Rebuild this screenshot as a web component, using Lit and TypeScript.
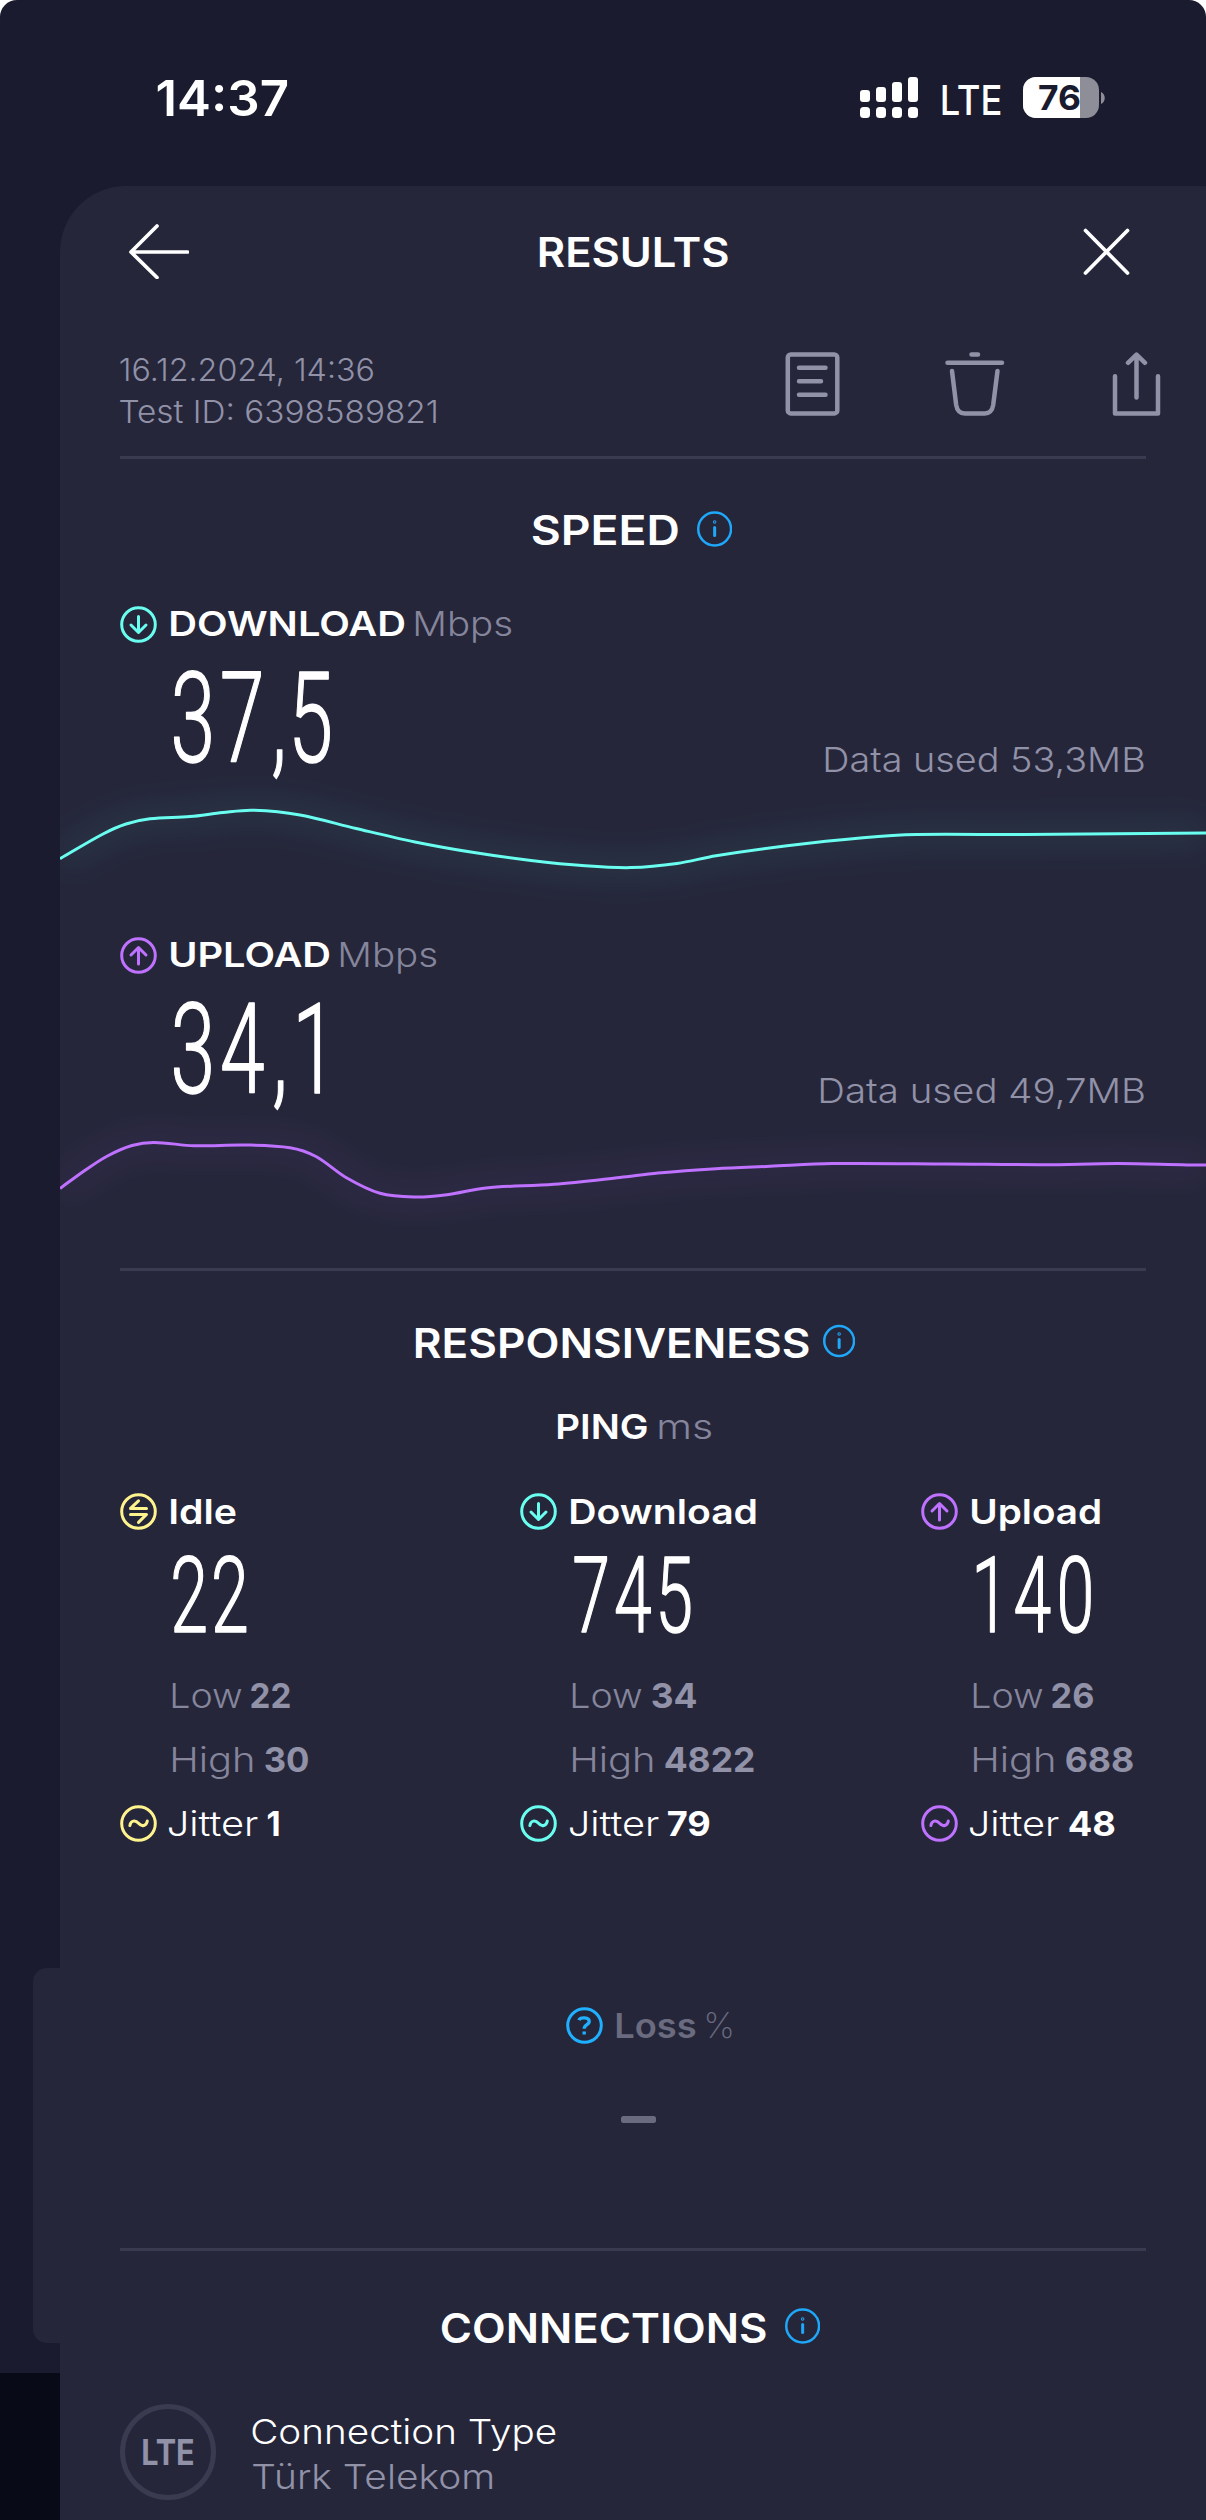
import { LitElement, html, svg, css } from "lit";
import { customElement, property } from "lit/decorators.js";

type Point = [number, number];

const CAP = 0.727;

/** Text whose box is exactly its cap height, set to a fixed measured width. */
@customElement("fit-text")
class FitText extends LitElement {
  @property() text = "";
  @property({ type: Number }) width = 100;
  @property({ type: Number }) size = 34.6;
  @property({ type: Number }) weight = 400;
  @property({ type: Number }) lead = 0.08;
  @property({ type: Number }) trail = 0.06;

  static styles = css`
    :host { display: block; flex: none; }
    svg { display: block; overflow: visible; }
    text { font-family: Inter, "Liberation Sans", sans-serif; fill: currentColor; }
  `;

  render() {
    const h = this.size * CAP;
    const start = -this.lead * this.size;
    const length = this.width + (this.lead + this.trail) * this.size;
    return html`<svg width=${this.width} height=${h}>
      <text x=${start} y=${h} font-size=${this.size} font-weight=${this.weight}
        textLength=${length} lengthAdjust="spacingAndGlyphs">${this.text}</text>
    </svg>`;
  }
}

const LSB: Record<string, number> = {
  "0": 0.065, "1": 0.07, "2": 0.055, "3": 0.055, "4": 0.03, "5": 0.09, "7": 0.04, ",": 0.01,
};

/** Tall condensed figures. */
@customElement("tall-number")
class TallNumber extends LitElement {
  @property() value = "";
  @property({ type: Array }) stops: number[] = [];
  @property({ type: Number }) height = 90;

  static styles = css`
    :host { display: block; flex: none; }
    svg { display: block; overflow: visible; }
    text { font-family: Roboto, sans-serif; font-weight: 300; fill: #fff; stroke: #fff; stroke-width: 1.5; stroke-linejoin: round; }
  `;

  render() {
    const size = this.height / 0.715;
    const sx = 0.64;
    const xs = this.stops.map((s, i) => s / sx - (LSB[this.value[i]] ?? 0) * size + 1.5).join(" ");
    return html`<svg width="170" height=${this.height}>
      <text transform="scale(${sx} 1)" x=${xs} y=${this.height} font-size=${size}>${this.value}</text>
    </svg>`;
  }
}

const glyphs = {
  down: svg`<path d="M18.5 10.5V26M11 19l7.5 7.5L26 19"/>`,
  up: svg`<path d="M18.5 27V11M11 18l7.5-7.5L26 18"/>`,
  swap: svg`<path d="M26.5 15.4h-16l8-7.6M10.5 21.4h16l-8 8"/>`,
  wave: svg`<path d="M9.9 20.6c.6-5.200 5.400-6 8.600-2.300 3.200 3.800 8 2.800 8.800-2.400"/>`,
  help: svg`<path d="M12.900 13.200c1.200-3.200 10.400-3.500 10.300 1.400 0 3.300-5 3-5 7.200M18.200 24.600v3" stroke-width="3.400" stroke-linecap="butt"/>`,
};

@customElement("ring-icon")
class RingIcon extends LitElement {
  @property() kind: keyof typeof glyphs = "down";

  static styles = css`
    :host { display: block; flex: none; margin-left: -0.5px; }
    svg { display: block; fill: none; stroke: currentColor; stroke-width: 3; stroke-linecap: round; stroke-linejoin: round; }
  `;

  render() {
    return html`<svg width="37" height="37"><circle cx="18.5" cy="18.5" r="16.800"/>${glyphs[this.kind]}</svg>`;
  }
}

function smooth(points: Point[]): string {
  let d = `M${points[0][0]} ${points[0][1]}`;
  for (let i = 0; i < points.length - 1; i++) {
    const a = points[Math.max(0, i - 1)];
    const b = points[i];
    const c = points[i + 1];
    const e = points[Math.min(points.length - 1, i + 2)];
    const dx = (c[0] - b[0]) / 3;
    const m1 = (c[1] - a[1]) / (c[0] - a[0] || 1);
    const m2 = (e[1] - b[1]) / (e[0] - b[0] || 1);
    d += `C${b[0] + dx} ${b[1] + m1 * dx} ${c[0] - dx} ${c[1] - m2 * dx} ${c[0]} ${c[1]}`;
  }
  return d;
}

@customElement("speed-chart")
class SpeedChart extends LitElement {
  @property({ type: Array }) points: Point[] = [];

  static styles = css`
    :host { display: block; }
    svg { display: block; overflow: visible; fill: none; stroke: currentColor; }
    .glow { stroke-width: 34; opacity: 0.05; filter: blur(14px); clip-path: none; }
    .line { stroke-width: 3; }
    .clip { overflow: hidden; margin: -40px 0; padding: 40px 0; }
  `;

  render() {
    const d = smooth(this.points);
    return html`<div class="clip"><svg width="1146" height="110"><path class="glow" d=${d}/><path class="line" d=${d}/></svg></div>`;
  }
}

const downloadCurve: Point[] = [
  [0, 78.7], [43, 54], [66, 44], [90, 38.8], [130, 36.6], [163, 32.500], [193, 30.2], [240, 35], [296, 48.500], [355, 62], [414, 72.6],
  [471, 80.500], [525, 85.800], [571, 87.600], [617, 83.500], [656, 75.700], [725, 66], [803, 57.700], [857, 54.500], [965, 54.600], [1146, 52.900],
];
const uploadCurve: Point[] = [
  [0, 77.500], [23, 60.700], [47, 45.200], [72, 34.500], [94, 31.400], [134, 34.800], [185, 34], [230, 36.700], [256, 45.500], [286, 66.500],
  [320, 82.300], [355, 86], [387, 83.700], [426, 76.900], [494, 73.300], [560, 66.500], [598, 62], [656, 57.700], [710, 55.300],
  [772, 52.600], [888, 53], [984, 53.700], [1058, 52.600], [1127, 53.900], [1146, 53.900],
];

const pings = [
  { tone: "yellow", kind: "swap", name: "Idle", nameW: 64, value: "22", stops: [0, 40.800], low: "22", lowW: 39, high: "30", highW: 43, jitter: "1", jitterW: 11 },
  { tone: "cyan", kind: "down", name: "Download", nameW: 185, value: "745", stops: [0, 41, 86.500], low: "34", lowW: 44, high: "4822", highW: 89, jitter: "79", jitterW: 41 },
  { tone: "purple", kind: "up", name: "Upload", nameW: 128, value: "140", stops: [1, 40.500, 86], low: "26", lowW: 41, high: "688", highW: 67, jitter: "48", jitterW: 45 },
];

@customElement("app-root")
class AppRoot extends LitElement {
  static styles = css`
    :host { display: block; width: 1206px; height: 2520px; overflow: hidden; background: #fff; }
    svg { display: block; flex: none; }
    .screen { position: relative; width: 1206px; height: 2520px; overflow: hidden; background: #1a1b2e; border-radius: 17px 17px 0 0; color: #fff; }
    .under-card { position: absolute; left: 33px; top: 1968px; width: 60px; height: 375px; border-radius: 14px; background: #25263a; }
    .under-bar { position: absolute; left: 0; top: 2373px; width: 100px; height: 147px; background: #080a18; }
    .status { display: flex; align-items: center; box-sizing: border-box; height: 186px; padding: 9px 0 0 157px; }
    .signal { margin-left: 573px; }
    .network { margin: 4px 23px 0 24px; }
    .sheet { position: relative; box-sizing: border-box; width: 1206px; height: 2334px; margin-left: 60px; padding-top: 38px; background: #25263a; border-radius: 66px 66px 0 0; }
    .titlebar { display: flex; align-items: center; justify-content: space-between; width: 1003px; height: 55px; margin-left: 68px; }
    .titlebar svg, .tools svg { fill: none; stroke: currentColor; stroke-linecap: round; stroke-linejoin: round; }
    .titlebar svg { stroke-width: 3.700; }
    .body { margin-left: 60px; width: 1026px; }
    .meta { display: flex; justify-content: space-between; width: 1041px; height: 104px; margin-top: 73px; color: #9191a8; }
    .stamp { display: flex; flex-direction: column; gap: 19px; padding-top: 6px; }
    .tools { display: flex; align-items: flex-start; }
    .tools svg { stroke-width: 4.500; }
    .trash { margin: 0 107px 0 104px; }
    .rule { height: 3px; background: #3a3b50; }
    .heading { display: flex; align-items: center; justify-content: center; gap: 19.500px; height: 36px; margin-top: 51.500px; }
    .heading fit-text { padding-top: 3px; }
    .heading.tight { gap: 15px; padding-left: 5px; margin-top: 52px; }
    .heading.low { margin-top: 57px; padding-right: 3px; }
    .info { fill: none; stroke: #1fa8f9; stroke-width: 2.500; stroke-linecap: round; }
    .row { display: flex; align-items: center; height: 37px; }
    .row fit-text { margin-left: 14px; }
    .row fit-text.unit { margin-left: 11px; }
    .row fit-text.jit { margin-left: 11.500px; }
    .row fit-text.jv { margin-left: 9.500px; }
    .muted { color: #9191a8; }
    .unit { color: #85859c; }
    .metric { margin-top: 59px; }
    .metric.second { margin-top: 46.500px; }
    .reading { display: flex; align-items: flex-end; justify-content: space-between; margin: 29.500px 2px 0 54px; }
    .reading tall-number { padding-bottom: 10px; }
    .metric speed-chart { margin: 8px 0 0 -60px; width: 1146px; }
    .after { margin-top: 47px; }
    .cyan { color: #69fef0; }
    .purple { color: #bf71ff; }
    .yellow { color: #fff38e; }
    .blue { color: #1fb0ff; }
    .ping { display: flex; gap: 12.500px; margin: 54.500px 0 0 438px; }
    .pings { display: grid; grid-template-columns: 400.500px 400.500px 330px; margin-top: 54.200px; }
    .pings tall-number { margin: 26px 0 51.200px 53px; }
    .pair { display: flex; gap: 9.500px; margin: 0 0 38.800px 51.500px; }
    .pair.high { gap: 11.500px; margin-bottom: 32.800px; }
    .loss { margin: 165px 0 0 446.500px; color: #6b6b80; }
    .row fit-text.pct { margin-left: 11px; }
    .dash { width: 35px; height: 7px; margin: 72.500px 0 125px 501px; border-radius: 2.500px; background: #6b6b80; }
    .conn { display: flex; align-items: flex-start; gap: 37px; margin-top: 60px; }
    .badge { display: flex; align-items: center; justify-content: center; box-sizing: border-box; width: 96px; height: 96px; border: 5px solid #3a3b50; border-radius: 50%; color: #9191a8; }
    .names { display: flex; flex-direction: column; gap: 19.800px; padding-top: 15px; }
  `;

  private info(r = 16.4) {
    return html`<svg class="info" width=${r * 2 + 2.5} height="36">
      <circle cx=${r + 1.25} cy="18" r=${r}/>
      <path d="M${r + 1.25} 16.500v8" stroke-width="3"/>
      <circle cx=${r + 1.25} cy="11" r="0.500"/>
    </svg>`;
  }

  private metric(o: { second?: boolean; kind: string; tone: string; name: string; nameW: number; value: string; stops: number[]; used: string; usedW: number; curve: Point[] }) {
    return html`<div class="metric ${o.second ? "second" : ""}">
      <div class="row">
        <ring-icon class=${o.tone} kind=${o.kind}></ring-icon>
        <fit-text text=${o.name} width=${o.nameW} weight="600"></fit-text>
        <fit-text class="unit" text="Mbps" width="96" weight="300"></fit-text>
      </div>
      <div class="reading">
        <tall-number value=${o.value} .stops=${o.stops}></tall-number>
        <fit-text class="muted" text=${o.used} width=${o.usedW} weight="320"></fit-text>
      </div>
      <speed-chart class=${o.tone} .points=${o.curve}></speed-chart>
    </div>`;
  }

  render() {
    return html`<div class="screen">
      <div class="under-card"></div>
      <div class="under-bar"></div>
      <div class="status">
        <fit-text text="14:37" width="130" size="49.500" weight="600" lead="0.030" trail="0.040"></fit-text>
        <svg class="signal" width="59" height="42" fill="#fff">
          <rect x="0" y="13" width="10" height="12" rx="3"/><rect x="16" y="10" width="10" height="15" rx="3"/>
          <rect x="32" y="5" width="10" height="20" rx="3"/><rect x="48" y="0" width="10" height="25" rx="3"/>
          <rect x="0" y="30" width="10" height="11" rx="3.500"/><rect x="16" y="30" width="10" height="11" rx="3.500"/>
          <rect x="32" y="30" width="10" height="11" rx="3.500"/><rect x="48" y="30" width="10" height="11" rx="3.500"/>
        </svg>
        <fit-text class="network" text="LTE" width="57" size="41" weight="500"></fit-text>
        <svg width="83" height="42">
          <defs><clipPath id="cell"><rect width="76" height="41" rx="13"/></clipPath></defs>
          <g clip-path="url(#cell)"><rect width="76" height="41" fill="#8e8e98"/><rect width="57" height="41" fill="#fff"/></g>
          <path d="M78 15c5 2 5 10 0 12z" fill="#8e8e98"/>
          <text x="15" y="33" font-family="Inter, sans-serif" font-size="34" font-weight="700" fill="#1a1b2e" textLength="43" lengthAdjust="spacingAndGlyphs">76</text>
        </svg>
      </div>
      <div class="sheet">
        <div class="titlebar">
          <svg width="61" height="55"><path d="M59.500 28H3M29 2 3 28l26 25.500"/></svg>
          <fit-text text="RESULTS" width="187" size="41" weight="600"></fit-text>
          <svg width="53" height="55"><path d="m7.500 6.500 42 42.500M49.500 6.500 7.500 49"/></svg>
        </div>
        <div class="body">
          <div class="meta">
            <div class="stamp">
              <fit-text text="16.12.2024, 14:36" width="253" size="31.800" weight="350" lead="0.040"></fit-text>
              <fit-text text="Test ID: 6398589821" width="317" size="31.800" weight="350" lead="0.050"></fit-text>
            </div>
            <div class="tools">
              <svg width="56" height="65"><rect x="2.800" y="2.400" width="49.500" height="59" rx="3"/><path d="M14 15.800h26.500M14 29.200h22M14 42.700h26.500"/></svg>
              <svg class="trash" width="60" height="65"><path d="M26.500 2.400h6.500M2.500 10.800h54.500M7 19l4.200 34c.8 5 3.500 8.400 8.500 8.400h20c5 0 7.700-3.400 8.500-8.400L52.500 19"/></svg>
              <svg width="49" height="65"><path d="M3 24.200v37.400h43V24.200M24.500 45.500V3M16 10.800 24.500 2.600 33 10.800"/></svg>
            </div>
          </div>
          <div class="rule"></div>
          <div class="heading">
            <fit-text text="SPEED" width="143.500" size="40.800" weight="600"></fit-text>${this.info()}
          </div>
          ${this.metric({ kind: "down", tone: "cyan", name: "DOWNLOAD", nameW: 233, value: "37,5", stops: [0, 48, 97, 120.5], used: "Data used 53,3MB", usedW: 318.6, curve: downloadCurve })}
          ${this.metric({ second: true, kind: "up", tone: "purple", name: "UPLOAD", nameW: 158, value: "34,1", stops: [0, 47.5, 98, 123], used: "Data used 49,7MB", usedW: 324, curve: uploadCurve })}
          <div class="rule after"></div>
          <div class="heading tight">
            <fit-text text="RESPONSIVENESS" width="392" size="40.800" weight="600"></fit-text>${this.info(14.9)}
          </div>
          <div class="ping">
            <fit-text text="PING" width="88.500" weight="600"></fit-text>
            <fit-text class="unit" text="ms" width="52" weight="300"></fit-text>
          </div>
          <div class="pings">
            ${pings.map((p) => html`<div>
              <div class="row">
                <ring-icon class=${p.tone} kind=${p.kind}></ring-icon>
                <fit-text text=${p.name} width=${p.nameW} weight="600"></fit-text>
              </div>
              <tall-number value=${p.value} .stops=${p.stops} height="76"></tall-number>
              <div class="pair">
                <fit-text class="unit" text="Low" width="70" weight="300" trail="0.020"></fit-text>
                <fit-text class="muted" text=${p.low} width=${p.lowW} weight="700" lead="0.040" trail="0.040"></fit-text>
              </div>
              <div class="pair high">
                <fit-text class="unit" text="High" width="81.500" weight="300"></fit-text>
                <fit-text class="muted" text=${p.high} width=${p.highW} weight="700" lead="0.040" trail="0.040"></fit-text>
              </div>
              <div class="row">
                <ring-icon class=${p.tone} kind="wave"></ring-icon>
                <fit-text class="jit" text="Jitter" width="90" weight="320" lead="0.040" trail="0.010"></fit-text>
                <fit-text class="jv" text=${p.jitter} width=${p.jitterW} weight="700" lead="0.040" trail="0.050"></fit-text>
              </div>
            </div>`)}
          </div>
          <div class="row loss">
            <ring-icon class="blue" kind="help"></ring-icon>
            <fit-text text="Loss" width="77.500" weight="600"></fit-text>
            <fit-text class="pct" text="%" width="27" weight="200"></fit-text>
          </div>
          <div class="dash"></div>
          <div class="rule"></div>
          <div class="heading low">
            <fit-text text="CONNECTIONS" width="322" size="40.800" weight="600"></fit-text>${this.info()}
          </div>
          <div class="conn">
            <div class="badge"><fit-text text="LTE" width="48.500" size="35.500" weight="700"></fit-text></div>
            <div class="names">
              <fit-text text="Connection Type" width="302" weight="330"></fit-text>
              <fit-text class="muted" text="Türk Telekom" width="240" weight="330" lead="0.050"></fit-text>
            </div>
          </div>
        </div>
      </div>
    </div>`;
  }
}
